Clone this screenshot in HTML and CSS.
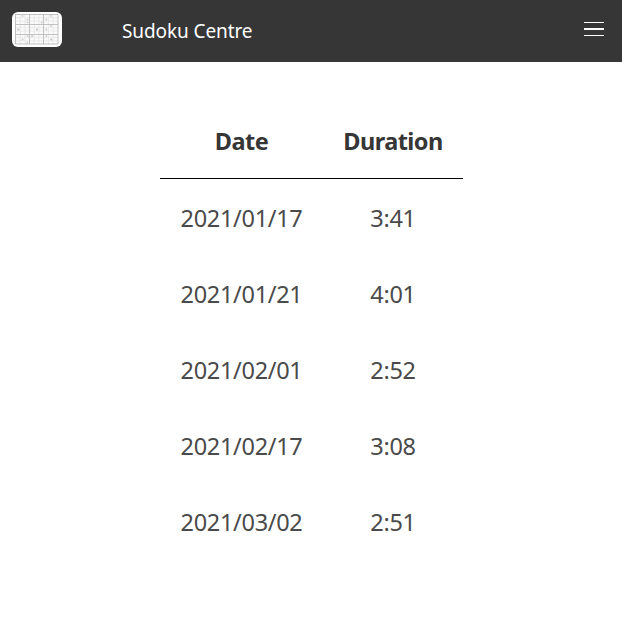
FILE: index.html
```html
<!DOCTYPE html>
<html lang="en">
<head>
<meta charset="utf-8">
<title>Sudoku Centre</title>
<link rel="stylesheet" href="styles.css">
</head>
<body>
<nav class="navbar">
  <svg class="logo" width="50" height="35" viewBox="0 0 50 35" aria-hidden="true">
    <rect width="50" height="35" rx="6" fill="#fff"/>
    <rect x="3.5" y="2.5" width="42.5" height="29.5" fill="#fafafa"/>
    <path d="M8.2 2.5v29.5M12.9 2.5v29.5M22.3 2.5v29.5M27 2.5v29.5M36.4 2.5v29.5M41.1 2.5v29.5M3.5 5.8h42.5M3.5 9.1h42.5M3.5 15.7h42.5M3.5 19h42.5M3.5 25.4h42.5M3.5 28.7h42.5" stroke="#e4e4e4" stroke-width=".7" fill="none"/>
    <path d="M3.5 2.5h42.5v29.5h-42.5zM17.5 2.5v29.5M31.5 2.5v29.5M3.5 12.5h42.5M3.5 22.5h42.5" stroke="#b4b4b4" stroke-width=".8" fill="none"/>
    <path d="M9.8 4h1.5M14.7 7.5h1.5M14.7 10.5h1.5M28.8 10.5h1.5M38.2 4h1.5M33.6 7.5h1.5M5.2 17.5h2M24 17.5h2M38.2 14h1.5M33.6 17.5h1.5M14.7 24h1.5M19.2 24h2M33.6 24h1.5M9.8 27.5h1.5M38.2 27.5h2M14.7 30.5h1.5" stroke="#c4c4c4" stroke-width="1.3" fill="none"/>
  </svg>
  <span class="brand">Sudoku Centre</span>
  <svg class="burger" width="20" height="14" viewBox="0 0 20 14" role="img" aria-label="Menu">
    <path d="M0 0h20v1H0zM0 6h20v2H0zM0 13h20v1H0z" fill="#fff"/>
  </svg>
</nav>
<main class="content">
  <table class="times">
    <thead><tr><th class="date">Date</th><th class="duration">Duration</th></tr></thead>
    <tbody>
      <tr><td>2021/01/17</td><td>3:41</td></tr>
      <tr><td>2021/01/21</td><td>4:01</td></tr>
      <tr><td>2021/02/01</td><td>2:52</td></tr>
      <tr><td>2021/02/17</td><td>3:08</td></tr>
      <tr><td>2021/03/02</td><td>2:51</td></tr>
    </tbody>
  </table>
</main>
</body>
</html>
```
FILE: styles.css
```css
body {
  margin: 0;
  background: #fff;
  color: #4a4a4a;
  font-family: "Noto Sans", "Open Sans", sans-serif;
}

.navbar {
  display: flex;
  box-sizing: border-box;
  height: 62px;
  padding: 12px 18px 0 12px;
  background: #363636;
}

.logo {
  flex: none;
}

.brand {
  margin-left: 60px;
  color: #fff;
  font-size: 19px;
  line-height: 38px;
  letter-spacing: -0.1px;
}

.burger {
  flex: none;
  margin: 10px 0 0 auto;
}

.content {
  padding-top: 41px;
}

.times {
  width: 303px;
  margin: 0 auto 0 160px;
  table-layout: fixed;
  border-collapse: separate;
  border-spacing: 0;
  font-size: 23.5px;
  line-height: 36px;
  text-align: center;
}

.times th,
.times td {
  box-sizing: border-box;
  height: 76px;
  padding: 21px 0 19px;
  letter-spacing: -0.3px;
}

.times th {
  border-bottom: 1px solid #000;
  padding: 20px 0 19px;
  color: #363636;
  font-weight: 700;
  letter-spacing: -0.55px;
}

.date {
  width: 163px;
}

.duration {
  width: 140px;
}
```
